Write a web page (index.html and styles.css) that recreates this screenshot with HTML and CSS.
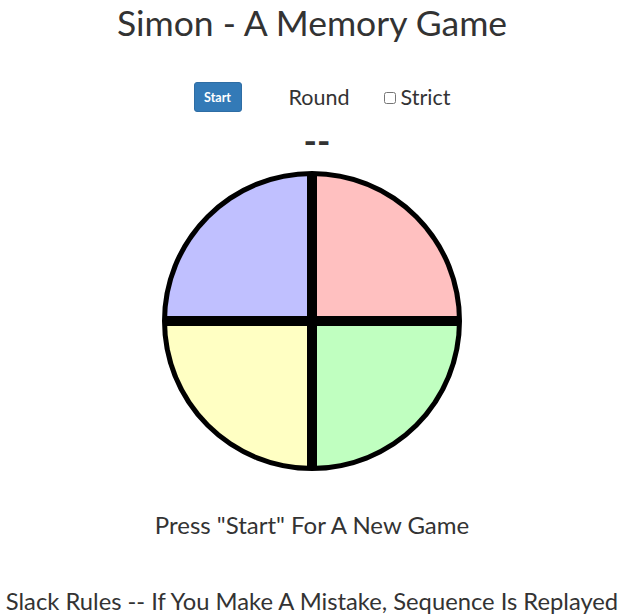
FILE: index.html
```html
<!DOCTYPE html>
<html>
<head>
<meta charset="utf-8">
<link rel="stylesheet" href="styles.css">
</head>
<body>
<div class="page">
  <h1 class="title">Simon - A Memory Game</h1>
  <div class="controls">
    <button class="start-btn">Start</button>
    <span class="round-label">Round</span>
    <label class="strict"><input type="checkbox" class="strict-box"><span>Strict</span></label>
  </div>
  <div class="count">--</div>
  <div class="board">
    <div class="pad pad-blue"></div>
    <div class="pad pad-red"></div>
    <div class="pad pad-yellow"></div>
    <div class="pad pad-green"></div>
  </div>
  <p class="message">Press "Start" For A New Game</p>
  <p class="rules">Slack Rules -- If You Make A Mistake, Sequence Is Replayed</p>
</div>
</body>
</html>
```

FILE: styles.css
```css
html, body {
  margin: 0;
  padding: 0;
  background: #fff;
}
body {
  font-family: Lato, "Open Sans", sans-serif;
  color: #333;
}
.page {
  width: 624px;
  display: flex;
  flex-direction: column;
  align-items: center;
}
.title {
  font-size: 35.5px;
  font-weight: 400;
  line-height: 40px;
  margin: 3px 0 0 0;
}
.controls {
  display: flex;
  align-items: center;
  margin-top: 39px;
  padding-left: 20px;
}
.start-btn {
  width: 48px;
  height: 30px;
  background: #337ab7;
  border: 1px solid #2e6da4;
  border-radius: 3px;
  color: #fff;
  font-family: Lato, sans-serif;
  font-size: 12.5px;
  font-weight: 700;
  padding: 0;
}
.round-label {
  font-size: 21.5px;
  margin-left: 47px;
}
.strict {
  display: flex;
  align-items: center;
  margin-left: 34px;
  font-size: 21.5px;
}
.strict-box {
  width: 12px;
  height: 12px;
  margin: 2px 5px 0 0;
}
.count {
  font-size: 36px;
  font-weight: 700;
  line-height: 30px;
  margin-top: 13px;
  padding-left: 10px;
}
.board {
  width: 300px;
  height: 300px;
  box-sizing: border-box;
  border: 5px solid #000;
  border-radius: 50%;
  background: #000;
  overflow: hidden;
  display: grid;
  grid-template-columns: 140px 140px;
  grid-template-rows: 140px 140px;
  gap: 10px;
  margin-top: 16px;
}
.pad-blue { background: #c0c0ff; }
.pad-red { background: #ffc0c0; }
.pad-yellow { background: #ffffc3; }
.pad-green { background: #c0ffc0; }
.message {
  font-size: 24px;
  margin: 39px 0 0 0;
  line-height: 30px;
}
.rules {
  font-size: 23.75px;
  margin: 46px 0 0 0;
  line-height: 30px;
  white-space: nowrap;
}
```
